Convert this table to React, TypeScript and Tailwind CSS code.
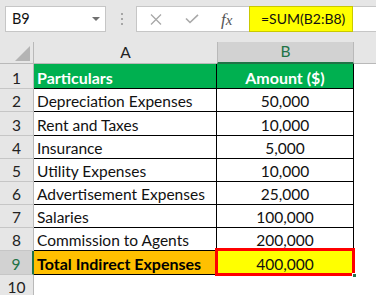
import React from "react";

const rows: { n: number; a: string; b: string; h: number }[] = [
  { n: 1, a: "Particulars", b: "Amount ($)", h: 25 },
  { n: 2, a: "Depreciation Expenses", b: "50,000", h: 23 },
  { n: 3, a: "Rent and Taxes", b: "10,000", h: 24 },
  { n: 4, a: "Insurance", b: "5,000", h: 23 },
  { n: 5, a: "Utility Expenses", b: "10,000", h: 23 },
  { n: 6, a: "Advertisement Expenses", b: "25,000", h: 23 },
  { n: 7, a: "Salaries", b: "100,000", h: 23 },
  { n: 8, a: "Commission to Agents", b: "200,000", h: 23 },
  { n: 9, a: "Total Indirect Expenses", b: "400,000", h: 24 },
];

export default function App() {
  return (
    <div
      className="w-[376px] h-[295px] overflow-hidden bg-[#e6e6e6] text-[15.5px] text-[#111]"
      style={{ fontFamily: "Lato, 'Noto Sans', sans-serif" }}
    >
      {/* formula bar */}
      <div className="h-[42px] pt-[6px] flex items-start">
        <div className="ml-[5px] w-[101px] h-[26px] bg-white border border-[#c6c6c6] flex items-center justify-between pl-[6px] pr-[5px]">
          <span className="leading-none text-[14.5px]">B9</span>
          <svg width="8" height="5" viewBox="0 0 8 5">
            <polygon points="0,0 8,0 4,4" fill="#707070" />
          </svg>
        </div>
        <div className="ml-[14px] w-[3px] h-[26px] flex flex-col items-center justify-center gap-[3px]">
          <div className="w-[2px] h-[2px] bg-[#a6a6a6]" />
          <div className="w-[2px] h-[2px] bg-[#a6a6a6]" />
          <div className="w-[2px] h-[2px] bg-[#a6a6a6]" />
        </div>
        <div className="ml-[13px] flex-1 h-[26px] bg-white border-y border-l border-[#c6c6c6] flex items-stretch">
          <div className="w-[112px] flex items-center">
            <svg className="ml-[13px]" width="12" height="11" viewBox="0 0 12 11">
              <path d="M1 0.5 L11 10.5 M11 0.5 L1 10.5" stroke="#a8a8a8" strokeWidth="1.3" fill="none" />
            </svg>
            <svg className="ml-[23px]" width="14" height="10" viewBox="0 0 14 10">
              <path d="M1 4.5 L5 8.5 L13 0.8" stroke="#a8a8a8" strokeWidth="1.6" fill="none" />
            </svg>
            <span
              className="ml-[22px] italic text-[15px] text-[#555] leading-none"
              style={{ fontFamily: "'Liberation Serif', serif" }}
            >
              <span className="text-[17px]">f</span>x
            </span>
          </div>
          <div className="-my-px w-[104px] bg-[#ffff00] border border-[#c9c900] flex items-center pl-[11px]">
            <span className="leading-none text-[14px]">=SUM(B2:B8)</span>
          </div>
        </div>
      </div>

      {/* column headers */}
      <div className="flex h-[22px]">
        <div className="relative w-[34px] border-r border-b border-[#b9b9b9]">
          <svg className="absolute left-0 top-0" width="33" height="21" viewBox="0 0 33 21">
            <polygon points="30,4 30,19 15,19" fill="#b4b4b4" />
          </svg>
        </div>
        <div className="w-[183px] border-b border-[#b9b9b9] flex items-center justify-center text-[#222]">
          A
        </div>
        <div className="w-[137px] bg-[#d2d2d2] border-b-2 border-[#217346] border-l border-l-[#b9b9b9] border-r border-r-[#b9b9b9] flex items-center justify-center text-[#217346]">
          B
        </div>
        <div className="flex-1 border-b border-[#b9b9b9]" />
      </div>

      {/* rows */}
      {rows.map((r) => {
        const head = r.n === 1;
        const total = r.n === 9;
        return (
          <div key={r.n} className="flex" style={{ height: r.h }}>
            <div
              className={
                total
                  ? "w-[34px] bg-[#d2d2d2] border-b border-[#c6c6c6] border-r-2 border-r-[#217346] flex items-end justify-center pb-[1px] text-[#217346] leading-[18px]"
                  : "w-[34px] border-b border-[#c6c6c6] border-r border-r-[#b9b9b9] flex items-end justify-center pb-[1px] text-[#222] leading-[18px]"
              }
            >
              {r.n}
            </div>
            <div
              className={
                head
                  ? "w-[183px] bg-[#00b050] border-b border-r border-black flex items-end pl-[3px] pb-[1px] leading-[18px] font-bold text-white text-[16px]"
                  : total
                  ? "w-[183px] bg-[#ffc000] border-b border-r border-black flex items-end pl-[3px] pb-[1px] leading-[18px] font-bold text-black text-[16px]"
                  : "w-[183px] bg-white border-b border-r border-black flex items-end pl-[3px] pb-[1px] leading-[18px]"
              }
            >
              <span className="whitespace-nowrap">{r.a}</span>
            </div>
            <div
              className={
                head
                  ? "w-[137px] bg-[#00b050] border-b border-r border-black flex items-end justify-center pb-[1px] leading-[18px] font-bold text-white text-[16px]"
                  : total
                  ? "relative w-[137px] bg-[#ffff00] border-b border-r border-black flex items-end justify-center pb-[1px] leading-[18px]"
                  : "w-[137px] bg-white border-b border-r border-black flex items-end justify-center pb-[1px] leading-[18px]"
              }
            >
              <span className="whitespace-nowrap">{r.b}</span>
              {total && (
                <>
                  <div className="absolute left-[-2px] top-[-3px] right-[-2px] bottom-[-2px] border-[3px] border-[#ff0000]" />
                  <div className="absolute right-[-4px] bottom-[-4px] w-[5px] h-[5px] bg-[#217346] border border-white" />
                </>
              )}
            </div>
            <div className="flex-1 bg-white" />
          </div>
        );
      })}
      <div className="flex h-[30px]">
        <div className="w-[34px] border-r border-[#b9b9b9] flex items-start justify-center pt-[3px] text-[#222] leading-[18px]">
          10
        </div>
        <div className="flex-1 bg-white" />
      </div>
    </div>
  );
}
